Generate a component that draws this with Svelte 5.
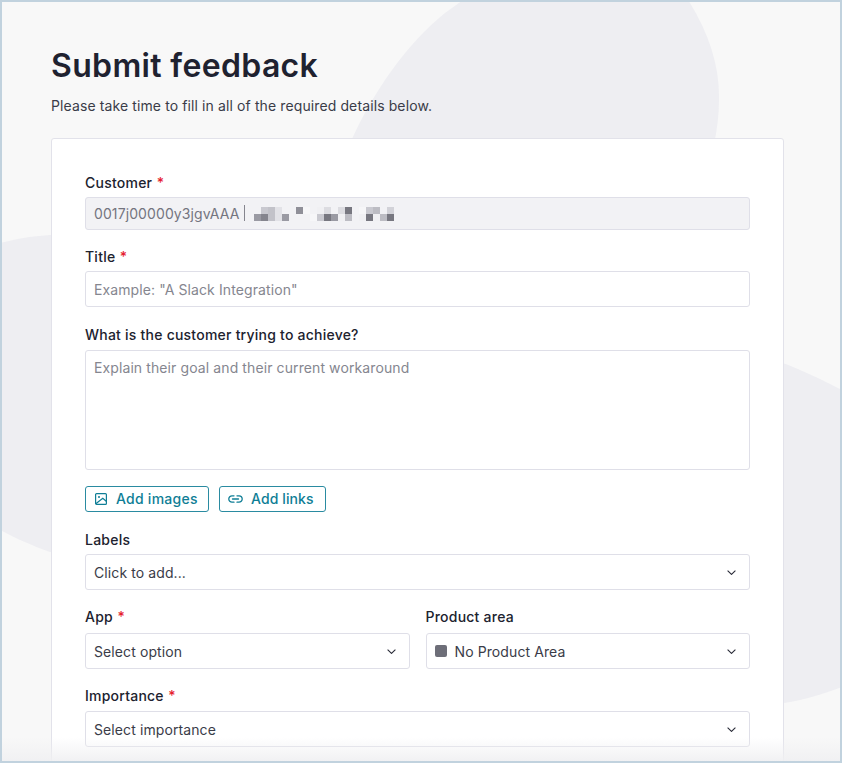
<script>
  const cell = 7;
  const pixels = [
    [0,1,'#9a9aa3'],[1,0,'#c9c9d0'],[1,1,'#85858e'],[2,0,'#c2c2c9'],[2,1,'#c2c2c9'],[3,0,'#e2e2e7'],[3,1,'#e2e2e7'],[4,1,'#9a9aa3'],
    [6,0,'#8f8f98'],[7,0,'#f6f6f8'],[8,1,'#f6f6f8'],
    [9,0,'#f0f0f3'],[9,1,'#c9c9d0'],[10,0,'#dcdce1'],[10,1,'#777780'],[11,1,'#9a9aa3'],[12,0,'#dcdce1'],[12,1,'#f0f0f3'],[13,0,'#777780'],[13,1,'#bcbcc3'],
    [15,0,'#f6f6f8'],[15,1,'#f0f0f3'],[16,0,'#c9c9d0'],[16,1,'#777780'],[17,0,'#bcbcc3'],[17,1,'#f0f0f3'],[18,1,'#bcbcc3'],[19,0,'#d2d2d8'],[19,1,'#777780']
  ];
</script>

<div class="frame">
  <svg class="blobs" viewBox="0 0 842 763" preserveAspectRatio="none" aria-hidden="true">
    <path d="M352 139 C372 95 405 45 445 13 L470 -5 L685 -5 C708 30 720 65 719 100 C719 115 717 128 715 140 Z" />
    <path d="M0 243 C20 238 35 236 50 235 L160 235 L160 560 L50 552 C30 545 15 538 0 530 Z" />
    <path d="M740 350 C760 353 800 368 842 390 L842 687 C825 693 805 700 784 703 L740 710 Z" />
  </svg>

  <main class="page">
    <h1>Submit feedback</h1>
    <p class="lead">Please take time to fill in all of the required details below.</p>

    <section class="card">
      <div class="field customer">
        <span class="label">Customer <i>*</i></span>
        <div class="control readonly">
          <span>0017j00000y3jgvAAA</span>
          <span class="divider"></span>
          <span class="redacted" aria-hidden="true">
            {#each pixels as [col, row, c]}
              <b style="left:{col * cell}px;top:{row * cell}px;background:{c}"></b>
            {/each}
          </span>
        </div>
      </div>

      <div class="field title">
        <span class="label">Title <i>*</i></span>
        <div class="control tall placeholder">Example: "A Slack Integration"</div>
      </div>

      <div class="field goal">
        <span class="label">What is the customer trying to achieve?</span>
        <div class="control area placeholder">Explain their goal and their current workaround</div>
      </div>

      <div class="actions">
        <button type="button" class="images">
          <svg viewBox="0 0 12 12" width="12" height="12" fill="none" stroke="currentColor" stroke-width="1.2">
            <rect x="0.6" y="0.6" width="10.8" height="10.8" rx="1" />
            <circle cx="4" cy="4" r="1" fill="currentColor" stroke="none" />
            <path d="M0.8 10.8 L7.8 5.2 L11.2 8.2" />
          </svg>
          <span>Add images</span>
        </button>
        <button type="button" class="links">
          <svg viewBox="0 0 15 8" width="15" height="8" fill="none" stroke="currentColor" stroke-width="1.3" stroke-linecap="round">
            <path d="M6 0.8 H4 A3.2 3.2 0 0 0 4 7.2 H6" />
            <path d="M9 0.8 H11 A3.2 3.2 0 0 1 11 7.2 H9" />
            <path d="M4.5 4 H10.5" />
          </svg>
          <span>Add links</span>
        </button>
      </div>

      <div class="field labels">
        <span class="label">Labels</span>
        <div class="control tall select">
          <span>Click to add...</span>
          {@render chevron()}
        </div>
      </div>

      <div class="pair">
        <div class="field">
          <span class="label">App <i>*</i></span>
          <div class="control tall select">
            <span>Select option</span>
            {@render chevron()}
          </div>
        </div>
        <div class="field">
          <span class="label">Product area</span>
          <div class="control tall select">
            <span class="with-swatch"><span class="swatch"></span>No Product Area</span>
            {@render chevron()}
          </div>
        </div>
      </div>

      <div class="field importance">
        <span class="label">Importance <i>*</i></span>
        <div class="control tall select">
          <span>Select importance</span>
          {@render chevron()}
        </div>
      </div>
    </section>
  </main>

  <div class="fade"></div>
</div>

{#snippet chevron()}
  <svg class="chev" viewBox="0 0 9 5" width="9" height="5" fill="none" stroke="#2a2c38" stroke-width="1.1">
    <path d="M0.6 0.6 L4.5 4.4 L8.4 0.6" />
  </svg>
{/snippet}

<style>
  :global(body) {
    margin: 0;
    font-family: Inter, "Liberation Sans", sans-serif;
  }
  .frame {
    position: relative;
    box-sizing: border-box;
    width: 842px;
    height: 763px;
    overflow: hidden;
    background: #f8f8f8;
    border: 2px solid #c1d2de;
  }
  .blobs {
    position: absolute;
    left: -2px;
    top: -2px;
    width: 842px;
    height: 763px;
  }
  .blobs path { fill: #eeeef2; }
  .page {
    position: relative;
    padding: 45px 56px 0 49px;
  }
  h1 {
    margin: 0;
    font-size: 32px;
    line-height: 38px;
    font-weight: 600;
    letter-spacing: 0.35px;
    color: #1f2230;
  }
  .lead {
    margin: 11px 0 0;
    font-size: 14px;
    line-height: 20px;
    letter-spacing: 0.11px;
    color: #3a3c48;
  }
  .card {
    box-sizing: border-box;
    margin-top: 22px;
    height: 640px;
    padding: 33px 33px 0;
    background: #fff;
    border: 1px solid #e2e2ea;
    border-radius: 3px;
  }
  .field { display: flex; flex-direction: column; }
  .label {
    font-size: 14px;
    line-height: 20px;
    font-weight: 500;
    letter-spacing: 0.23px;
    color: #20222e;
    margin-bottom: 5px;
  }
  .customer .label,
  .title .label {
    padding-top: 1px;
    margin-bottom: 4px;
  }
  .label i {
    font-style: normal;
    color: #e5202e;
    margin-left: 0.5px;
  }
  .control {
    box-sizing: border-box;
    display: flex;
    align-items: center;
    padding: 0 8px;
    font-size: 14px;
    letter-spacing: 0.1px;
    color: #3a3c48;
    background: #fff;
    border: 1px solid #dfdfe8;
    border-radius: 3px;
  }
  .readonly {
    height: 33px;
    padding-bottom: 1px;
    background: #f2f2f5;
    color: #74757f;
  }
  .divider {
    flex: none;
    width: 1px;
    height: 16px;
    margin: 0 9px 0 5px;
    background: #85858e;
  }
  .redacted {
    position: relative;
    display: block;
    width: 140px;
    height: 14px;
    margin-top: 1px;
  }
  .redacted b {
    position: absolute;
    width: 7px;
    height: 7px;
  }
  .tall { height: 36px; }
  .placeholder { color: #85868f; }
  .area {
    height: 120px;
    align-items: flex-start;
    padding-top: 8px;
    line-height: 17px;
  }
  .title { margin-top: 16px; }
  .goal { margin-top: 17px; }
  .goal .label {
    padding-top: 1px;
    margin-bottom: 5px;
  }
  .actions {
    display: flex;
    gap: 10px;
    margin-top: 16px;
  }
  .actions button {
    box-sizing: border-box;
    display: flex;
    align-items: center;
    height: 26px;
    font: 500 14px/1 Inter, "Liberation Sans", sans-serif;
    letter-spacing: 0.1px;
    white-space: nowrap;
    color: #0f7e96;
    background: #fff;
    border: 1px solid #2a8ba1;
    border-radius: 3px;
  }
  .actions .images { gap: 9px; width: 124px; padding: 0 9px; letter-spacing: 0.25px; }
  .links { gap: 8px; width: 107px; padding: 0 8px; }
  .labels { margin-top: 18px; }
  .labels .label { margin-bottom: 4px; }
  .select { justify-content: space-between; }
  .chev { margin-right: 5px; flex: none; }
  .pair {
    display: grid;
    grid-template-columns: 1fr 1fr;
    gap: 16px;
    margin-top: 17px;
  }
  .pair .label { margin-bottom: 6px; }
  .importance { margin-top: 17px; }
  .with-swatch {
    display: flex;
    align-items: center;
    gap: 8px;
  }
  .swatch {
    width: 12px;
    height: 12px;
    border-radius: 2px;
    background: #6d6e78;
  }
  .fade {
    position: absolute;
    left: 0;
    right: 0;
    bottom: 0;
    height: 24px;
    background: linear-gradient(to bottom, rgba(240, 240, 242, 0), rgba(240, 240, 242, 0.9));
  }
</style>
